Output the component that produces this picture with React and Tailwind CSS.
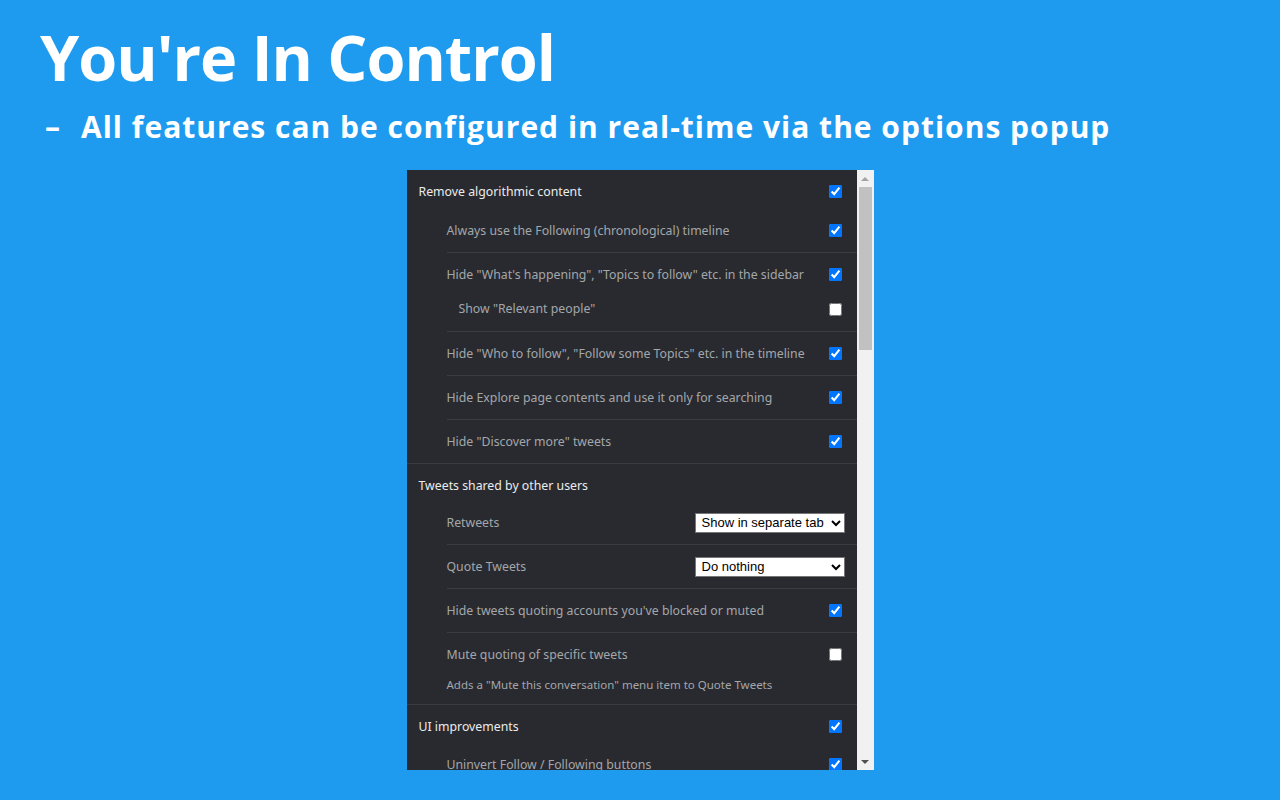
import React from "react";

const Check = ({ on, adj = true }) => (
  <input type="checkbox" defaultChecked={on} className={`w-[13px] h-[13px] m-0 shrink-0 ${adj ? "mt-[-2px]" : ""}`} />
);

const Sub = ({ children, border = true, right, h = "h-[43px]" }) => (
  <div className={`ml-[40px] ${border ? "border-t border-[#3b3c41]" : ""}`}>
    <div className={`${h} pt-[2px] flex items-center justify-between pr-[15px]`}>
      <span className="text-[#a3a7ab]">{children}</span>
      {right}
    </div>
  </div>
);

const Header = ({ children, right, h = "h-[38px]", pt = "pt-[6px]" }) => (
  <div className={`${h} ${pt} pl-[12px] pr-[15px] flex items-center justify-between`}>
    <span className="text-[#ececec]">{children}</span>
    {right}
  </div>
);

const Select = ({ value }) => (
  <select
    defaultValue={value}
    className="w-[150px] h-[20px] mt-[-2px] bg-white text-black border border-[#767676] text-[13px] leading-none px-[2px] mr-[-3px] [font-family:Arial,'Liberation_Sans',sans-serif]"
  >
    <option>{value}</option>
  </select>
);

export default function App() {
  return (
    <div className="w-[1280px] h-[800px] bg-[#1e9bef] overflow-hidden [font-family:'Open_Sans',sans-serif] text-white">
      <div className="pl-[40px] pt-[25px] text-[63px] leading-none font-bold tracking-[-1px]">You're In Control</div>
      <div className="mt-[24px] pl-[45px] flex text-[30px] leading-none font-bold tracking-[1px]">
        <span>–</span>
        <span className="ml-[20px]">All features can be configured in real-time via the options popup</span>
      </div>
      <div className="mt-[28px] mx-auto w-[467px] h-[600px] flex bg-[#292a2f] overflow-hidden">
        <div className="w-[450px] text-[12.3px] [font-family:'Noto_Sans',sans-serif]">
          <Header right={<Check on />}>Remove algorithmic content</Header>
          <Sub border={false} h="h-[44px]" right={<Check on />}>Always use the Following (chronological) timeline</Sub>
          <Sub right={<Check on />}>Hide "What's happening", "Topics to follow" etc. in the sidebar</Sub>
          <div className="h-[35px] pb-[8px] pl-[52px] pr-[15px] flex items-center justify-between">
            <span className="text-[#a3a7ab]">Show "Relevant people"</span>
            <Check on={false} adj={false} />
          </div>
          <Sub right={<Check on />}>Hide "Who to follow", "Follow some Topics" etc. in the timeline</Sub>
          <Sub right={<Check on />}>Hide Explore page contents and use it only for searching</Sub>
          <Sub right={<Check on />}>Hide "Discover more" tweets</Sub>

          <div className="border-t border-[#3b3c41]">
            <Header h="h-[37px]" pt="pt-[7px]">Tweets shared by other users</Header>
            <Sub border={false} right={<Select value="Show in separate tab" />}>Retweets</Sub>
            <Sub right={<Select value="Do nothing" />}>Quote Tweets</Sub>
            <Sub right={<Check on />}>Hide tweets quoting accounts you've blocked or muted</Sub>
            <div className="ml-[40px] border-t border-[#3b3c41] pb-[12px]">
              <div className="h-[43px] pt-[2px] flex items-center justify-between pr-[15px]">
                <span className="text-[#a3a7ab]">Mute quoting of specific tweets</span>
                <Check on={false} />
              </div>
              <div className="text-[11.5px] leading-[16px] pt-[1px] h-[16px] text-[#a3a7ab]">Adds a "Mute this conversation" menu item to Quote Tweets</div>
            </div>
          </div>

          <div className="border-t border-[#3b3c41]">
            <Header h="h-[38px]" pt="pt-[7px]" right={<Check on />}>UI improvements</Header>
            <Sub border={false} right={<Check on />}>Uninvert Follow / Following buttons</Sub>
          </div>
        </div>
        <div className="w-[17px] bg-[#f1f1f1] flex flex-col items-center">
          <div className="h-[17px] w-full flex items-center justify-center">
            <div className="w-0 h-0 border-l-[4px] border-r-[4px] border-b-[4px] border-l-transparent border-r-transparent border-b-[#a3a3a3]" />
          </div>
          <div className="w-[13px] h-[163px] bg-[#c1c1c1]" />
          <div className="flex-1" />
          <div className="h-[17px] w-full flex items-center justify-center">
            <div className="w-0 h-0 border-l-[4px] border-r-[4px] border-t-[4px] border-l-transparent border-r-transparent border-t-[#505050]" />
          </div>
        </div>
      </div>
    </div>
  );
}
